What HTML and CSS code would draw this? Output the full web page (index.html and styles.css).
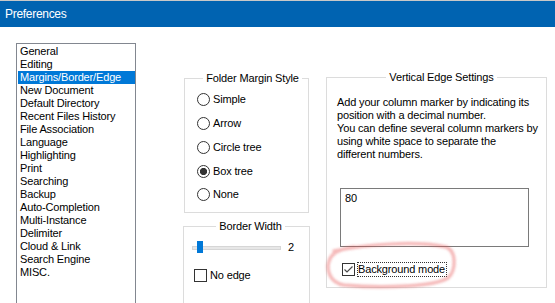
FILE: index.html
```html
<!DOCTYPE html>
<html lang="en">
<head>
  <meta charset="UTF-8" />
  <title>Preferences</title>
  <link rel="stylesheet" href="styles.css">
</head>
<body>

  <!-- Window caption -->
  <div class="titlebar">Preferences</div>

  <div class="content">
    <!-- Category list -->
    <ul class="category-list">
      <li>General</li>
      <li>Editing</li>
      <li class="selected">Margins/Border/Edge</li>
      <li>New Document</li>
      <li>Default Directory</li>
      <li>Recent Files History</li>
      <li>File Association</li>
      <li>Language</li>
      <li>Highlighting</li>
      <li>Print</li>
      <li>Searching</li>
      <li>Backup</li>
      <li>Auto-Completion</li>
      <li>Multi-Instance</li>
      <li>Delimiter</li>
      <li>Cloud &amp; Link</li>
      <li>Search Engine</li>
      <li>MISC.</li>
    </ul>

    <div class="middle">
      <fieldset class="group margin-style">
        <legend>Folder Margin Style</legend>
        <label class="option"><span class="radio"></span>Simple</label>
        <label class="option"><span class="radio"></span>Arrow</label>
        <label class="option"><span class="radio"></span>Circle tree</label>
        <label class="option"><span class="radio on"></span>Box tree</label>
        <label class="option"><span class="radio"></span>None</label>
      </fieldset>

      <fieldset class="group border-width">
        <legend>Border Width</legend>
        <div class="slider-row">
          <div class="slider"><span class="thumb"></span></div>
          <span class="value">2</span>
        </div>
        <label class="option check-row"><span class="checkbox"></span>No edge</label>
      </fieldset>
    </div>

    <fieldset class="group edge-settings">
      <legend>Vertical Edge Settings</legend>
      <p class="hint">Add your column marker by indicating its<br>position with a decimal number.<br>You can define several column markers by<br>using white space to separate the<br>different numbers.</p>
      <div class="edge-input">80</div>
      <label class="option bg-row">
        <span class="checkbox">
          <svg width="11" height="11" viewBox="0 0 11 11"><polyline points="1.5,5.5 4,8 9.5,2.5" fill="none" stroke="#4a4a4a" stroke-width="1.2"/></svg>
        </span>
        <span class="focus">Background mode</span>
      </label>
    </fieldset>
  </div>

  <!-- Hand-drawn highlight around the checkbox -->
  <svg class="scribble" width="136" height="52" viewBox="0 0 136 52">
    <defs><filter id="soft"><feGaussianBlur stdDeviation="0.8"/></filter></defs>
    <path d="M 10 11 C 40 5, 90 0, 122 7 C 133 11, 132 31, 124 38 C 112 46, 60 49, 20 45 C 6 43, 2 30, 5 21 C 7 14, 14 9, 30 7"
          fill="none" stroke="rgba(230,85,85,0.4)" stroke-width="3.5" stroke-linecap="round" filter="url(#soft)"/>
  </svg>

</body>
</html>
```

FILE: styles.css
```css
body {
  margin: 0;
  font: 11px/13px "Liberation Sans", Arial, sans-serif;
  letter-spacing: -0.15px;
  color: #000;
  background: #fff;
  overflow: hidden;
}

.titlebar {
  height: 26px;
  border-top: 1px solid #c8c8c8;
  background: #0063b1;
  color: #fff;
  font-size: 12px;
  line-height: 26px;
  padding-left: 5px;
  letter-spacing: -0.3px;
}

.content {
  display: flex;
  align-items: flex-start;
  padding-left: 16px;
}

/* left list */
.category-list {
  list-style: none;
  box-sizing: border-box;
  width: 120px;
  height: 300px;
  margin: 16px 0 0;
  padding: 1px 0 0 1px;
  border: 1px solid #828790;
}
.category-list li {
  height: 13px;
  padding-left: 2px;
  white-space: nowrap;
}
.category-list .selected {
  background: #0078d7;
  color: #fff;
}

/* group boxes */
.group {
  margin: 0;
  border: 1px solid #dcdcdc;
  min-width: 0;
}
.group legend {
  margin: 0 auto;
  padding: 0 3px;
  line-height: 13px;
}

.middle {
  margin-left: 48px;
  width: 125px;
  display: flex;
  flex-direction: column;
}

.margin-style {
  margin-top: 45px;
  padding: 3px 0 5px 12px;
}

.option {
  display: flex;
  align-items: center;
  gap: 3px;
  height: 23.75px;
  white-space: nowrap;
}

.radio {
  box-sizing: border-box;
  width: 13px;
  height: 13px;
  border: 1px solid #333;
  border-radius: 50%;
  background: #fff;
}
.radio.on {
  background: radial-gradient(circle, #333 3.3px, #fff 3.9px);
}

.checkbox {
  box-sizing: border-box;
  width: 13px;
  height: 13px;
  border: 1px solid #333;
  background: #fff;
  display: flex;
}

.border-width {
  margin: 7px -1px 0;
  padding: 5px 0 40px 8px;
}
.slider-row {
  display: flex;
  align-items: center;
  height: 20px;
}
.slider {
  position: relative;
  box-sizing: border-box;
  width: 89px;
  height: 4px;
  background: #e7e7e7;
  border: 1px solid #d6d6d6;
}
.slider .thumb {
  position: absolute;
  left: 4px;
  top: -6px;
  width: 6px;
  height: 12px;
  background: #0078d7;
}
.value {
  margin-left: 7px;
}
.check-row {
  margin: 8px 0 0 2px;
  height: 20px;
}

/* right group */
.edge-settings {
  box-sizing: border-box;
  width: 221px;
  margin-left: 17px;
  margin-top: 44px;
  padding: 12px 0 10px 10px;
}
.hint {
  margin: 0;
  white-space: nowrap;
}
.edge-input {
  box-sizing: border-box;
  width: 189px;
  height: 59px;
  margin: 27px 0 0 3px;
  padding: 3px 4px;
  border: 1px solid #7a7a7a;
}
.bg-row {
  height: 16px;
  margin: 14px 0 0 5px;
  gap: 2px;
}
.focus {
  border: 1px dotted #333;
  padding-right: 1px;
  line-height: 13px;
}

.scribble {
  position: absolute;
  left: 324px;
  top: 240px;
  pointer-events: none;
}
```
